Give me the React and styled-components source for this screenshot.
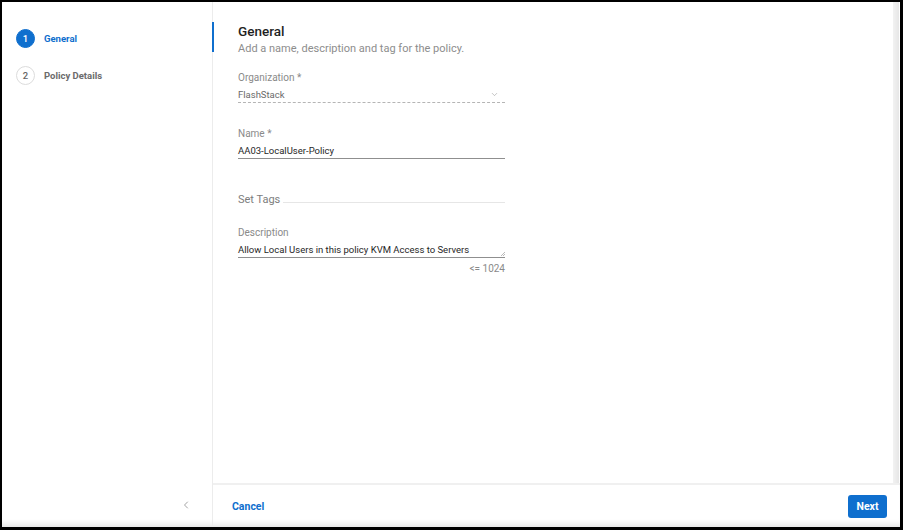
import React from 'react';
import styled, { createGlobalStyle } from 'styled-components';
import { ChevronDown, ChevronLeft } from 'lucide-react';

const GlobalStyle = createGlobalStyle`
  html, body {
    margin: 0;
    padding: 0;
    background: #fff;
  }
  body {
    font-family: Roboto, "Liberation Sans", Arial, sans-serif;
  }
  * {
    box-sizing: border-box;
  }
`;

const BLUE = '#0f6fce';

const Frame = styled.div`
  display: flex;
  width: 903px;
  height: 530px;
  border: 2px solid #000;
  border-right-width: 3px;
  border-bottom-width: 3px;
  background: #fff;
  overflow: hidden;
  box-shadow: inset 0 -7px 6px -5px rgba(0, 0, 0, 0.12);
`;

const Sidebar = styled.aside`
  display: flex;
  flex-direction: column;
  width: 211px;
  flex-shrink: 0;
  border-right: 1px solid #ececec;
  padding-top: 18px;
`;

const StepList = styled.ul`
  list-style: none;
  margin: 0;
  padding: 0;
  flex: 1;
`;

const Step = styled.li`
  position: relative;
  display: flex;
  align-items: center;
  gap: 9px;
  height: 37px;
  padding-left: 14px;

  &::after {
    content: '';
    display: ${props => (props.$active ? 'block' : 'none')};
    position: absolute;
    top: 2px;
    right: -2px;
    width: 2px;
    height: 30px;
    background: ${BLUE};
  }
`;

const StepBadge = styled.span`
  display: flex;
  align-items: center;
  justify-content: center;
  width: 19px;
  height: 19px;
  border-radius: 50%;
  font-size: 9.5px;
  font-weight: 500;
  background: ${props => (props.$active ? BLUE : '#fff')};
  color: ${props => (props.$active ? '#fff' : '#666')};
  border: 1px solid ${props => (props.$active ? BLUE : '#dcdcdc')};
`;

const StepLabel = styled.span`
  font-size: 9.5px;
  font-weight: 700;
  color: ${props => (props.$active ? BLUE : '#6b6b6b')};
`;

const SidebarFoot = styled.div`
  display: flex;
  align-items: center;
  justify-content: flex-end;
  height: 44px;
  padding-right: 20px;
  color: #8c8c8c;
`;

const Main = styled.main`
  display: flex;
  flex-direction: column;
  flex: 1;
  min-width: 0;
`;

const Body = styled.div`
  display: flex;
  flex: 1;
  min-height: 0;
`;

const Content = styled.section`
  flex: 1;
  padding: 21px 0 0 25px;
`;

const Scrollbar = styled.div`
  width: 6px;
  margin-right: 1px;
  background: linear-gradient(to right, #f2f2f2, #e6e6e6);
`;

const Heading = styled.h2`
  margin: 0;
  font-size: 13.5px;
  line-height: 16px;
  font-weight: 500;
  color: #1f1f1f;
`;

const Subtitle = styled.p`
  margin: 3px 0 0;
  font-size: 11px;
  line-height: 14px;
  color: #8d8d8d;
`;

const Form = styled.div`
  width: 267px;
`;

const Field = styled.div`
  margin-top: ${props => props.$gap}px;
`;

const Label = styled.div`
  font-size: 10px;
  line-height: 14px;
  color: #8a8a8a;
`;

const Control = styled.div`
  position: relative;
  display: flex;
  align-items: center;
  justify-content: space-between;
  height: 17px;
  margin-top: 1px;
  font-size: 9.5px;
  color: ${props => (props.$muted ? '#6a6a6a' : '#262626')};
  border-bottom: 1px ${props => (props.$dashed ? 'dashed #b5b5b5' : 'solid #8f8f8f')};
`;

const SelectIcon = styled(ChevronDown)`
  margin-right: 6px;
  color: #9a9a9a;
`;

const Resize = styled.svg`
  position: absolute;
  right: 0;
  bottom: 1px;
`;

const Counter = styled.div`
  margin-top: 5px;
  text-align: right;
  font-size: 10px;
  line-height: 12px;
  color: #8a8a8a;
`;

const Section = styled.div`
  display: flex;
  align-items: center;
  gap: 3px;
  margin-top: 34px;
  font-size: 11px;
  line-height: 14px;
  color: #7d7d7d;

  &::after {
    content: '';
    flex: 1;
    height: 1px;
    margin-top: 4px;
    background: #e6e6e6;
  }
`;

const Footer = styled.footer`
  display: flex;
  align-items: center;
  justify-content: space-between;
  height: 44px;
  padding: 0 13px 0 19px;
  border-top: 2px solid #f0f0f0;
`;

const LinkButton = styled.button`
  border: 0;
  background: none;
  padding: 0;
  font: inherit;
  font-size: 10.5px;
  font-weight: 700;
  color: ${BLUE};
`;

const PrimaryButton = styled.button`
  width: 39px;
  height: 23px;
  border: 0;
  border-radius: 3px;
  background: ${BLUE};
  font: inherit;
  font-size: 10.5px;
  font-weight: 700;
  color: #fff;
`;

const steps = [
  { num: 1, label: 'General', active: true },
  { num: 2, label: 'Policy Details', active: false },
];

export default function App() {
  return (
    <>
      <GlobalStyle />
      <Frame>
        <Sidebar>
          <StepList>
            {steps.map(step => (
              <Step key={step.num} $active={step.active}>
                <StepBadge $active={step.active}>{step.num}</StepBadge>
                <StepLabel $active={step.active}>{step.label}</StepLabel>
              </Step>
            ))}
          </StepList>
          <SidebarFoot>
            <ChevronLeft size={12} strokeWidth={1.6} />
          </SidebarFoot>
        </Sidebar>
        <Main>
          <Body>
            <Content>
              <Heading>General</Heading>
              <Subtitle>Add a name, description and tag for the policy.</Subtitle>
              <Form>
                <Field $gap={15}>
                  <Label>Organization *</Label>
                  <Control $dashed $muted>
                    FlashStack
                    <SelectIcon size={9} strokeWidth={1.5} />
                  </Control>
                </Field>
                <Field $gap={24}>
                  <Label>Name *</Label>
                  <Control>AA03-LocalUser-Policy</Control>
                </Field>
                <Section>Set Tags</Section>
                <Field $gap={19}>
                  <Label>Description</Label>
                  <Control>
                    Allow Local Users in this policy KVM Access to Servers
                    <Resize width="5" height="5" viewBox="0 0 5 5">
                      <path d="M1 5 L5 1 M3 5 L5 3" stroke="#aaa" strokeWidth="0.8" />
                    </Resize>
                  </Control>
                  <Counter>{'<= 1024'}</Counter>
                </Field>
              </Form>
            </Content>
            <Scrollbar />
          </Body>
          <Footer>
            <LinkButton>Cancel</LinkButton>
            <PrimaryButton>Next</PrimaryButton>
          </Footer>
        </Main>
      </Frame>
    </>
  );
}
